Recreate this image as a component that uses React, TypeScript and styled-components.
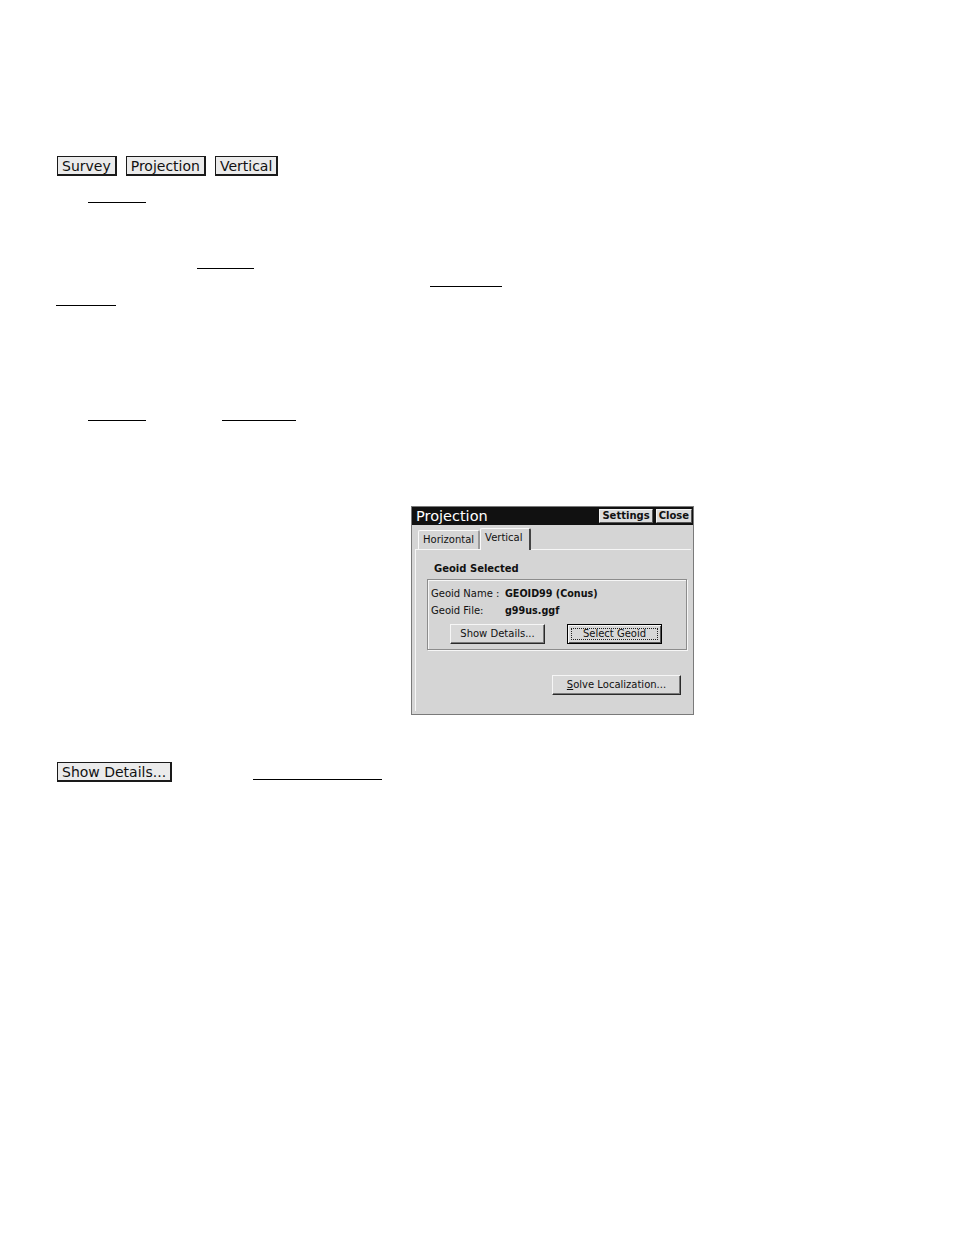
import React from 'react';
import styled, { createGlobalStyle } from 'styled-components';

const GlobalStyle = createGlobalStyle`
  html, body {
    margin: 0;
    padding: 0;
    background: #ffffff;
  }
  body {
    font-family: "DejaVu Sans", Verdana, sans-serif;
    color: #000;
  }
`;

const Page = styled.div`
  width: 954px;
  height: 1235px;
  box-sizing: border-box;
  padding: 156px 0 0 56px;
  background: #fff;
`;

const ButtonRow = styled.div`
  display: flex;
  align-items: center;
  gap: 9px;
  margin-left: 1px;
`;

const KeyButton = styled.span`
  display: inline-flex;
  align-items: center;
  justify-content: center;
  box-sizing: border-box;
  height: 20px;
  padding: 0 4px 0 4px;
  background: #ebebeb;
  border: 1px solid #1a1a1a;
  border-right-width: 2px;
  border-bottom-width: 2px;
  font-family: "DejaVu Sans", Verdana, sans-serif;
  font-size: 14px;
  line-height: 1;
  color: #111;
`;

const Row = styled.div<{ $h: number }>`
  display: flex;
  align-items: flex-end;
  height: ${(p) => p.$h}px;
`;

const FooterRow = styled.div`
  display: flex;
  align-items: flex-end;
  height: 20px;
  margin: 47px 0 0 1px;
`;

const Blank = styled.span<{ $ml: number; $w: number; $mb?: number }>`
  display: inline-block;
  margin-left: ${(p) => p.$ml}px;
  margin-bottom: ${(p) => p.$mb ?? 0}px;
  width: ${(p) => p.$w}px;
  height: 0;
  border-bottom: 1px solid #000;
`;

const Figure = styled.div`
  margin: 85px 0 0 355px;
`;

/* ---- Windows CE dialog ---- */

const Window = styled.div`
  width: 283px;
  height: 209px;
  box-sizing: border-box;
  border: 1px solid #7a7a7a;
  background: #d5d5d5;
  display: flex;
  flex-direction: column;
  font-family: "DejaVu Sans", Tahoma, sans-serif;
  font-size: 10px;
  color: #111;
`;

const TitleBar = styled.div`
  height: 18px;
  background: #111;
  display: flex;
  align-items: center;
  justify-content: space-between;
  padding: 0 1px 0 4px;
`;

const Title = styled.span`
  color: #fff;
  font-size: 14.5px;
  line-height: 1;
`;

const TitleButtons = styled.div`
  display: flex;
  gap: 3px;
`;

const TitleButton = styled.span`
  display: inline-flex;
  align-items: center;
  height: 14px;
  box-sizing: border-box;
  padding: 0 2px;
  background: #dcdcdc;
  border: 1px solid #f4f4f4;
  border-right-color: #555;
  border-bottom-color: #555;
  font-weight: bold;
  font-size: 10px;
  line-height: 1;
  color: #111;
`;

const TabStrip = styled.div`
  display: flex;
  align-items: flex-end;
  height: 22px;
  margin-top: 2px;
  padding-left: 6px;
`;

const Tab = styled.span<{ $active?: boolean }>`
  display: inline-flex;
  align-items: center;
  box-sizing: border-box;
  height: ${(p) => (p.$active ? 22 : 19)}px;
  padding: ${(p) => (p.$active ? '0 6px 5px 4px' : '0 4px 2px 4px')};
  border-left: 1px solid #fafafa;
  border-top: 1px solid #fafafa;
  border-right: 2px solid ${(p) => (p.$active ? '#444' : '#9a9a9a')};
  border-radius: 2px 2px 0 0;
  margin-bottom: ${(p) => (p.$active ? -1 : 0)}px;
  background: #d5d5d5;
  position: relative;
  z-index: ${(p) => (p.$active ? 1 : 0)};
`;

const Panel = styled.div`
  flex: 1;
  margin: 0 2px 3px 3px;
  border-top: 1px solid #f6f6f6;
  border-left: 1px solid #f6f6f6;
  padding: 12px 4px 0 11px;
  display: flex;
  flex-direction: column;
`;

const Heading = styled.div`
  font-weight: bold;
  font-size: 10px;
  margin-left: 7px;
  height: 13px;
  line-height: 13px;
`;

const GroupBox = styled.div`
  margin-top: 4px;
  height: 71px;
  box-sizing: border-box;
  border: 1px solid #8c8c8c;
  box-shadow: inset 1px 1px 0 #f6f6f6, 1px 1px 0 #f6f6f6;
  padding: 5px 3px 0 3px;
  display: flex;
  flex-direction: column;
`;

const Field = styled.div`
  display: flex;
  align-items: center;
  height: 17px;
`;

const Label = styled.span`
  width: 74px;
  font-size: 10px;
`;

const Value = styled.span`
  font-weight: bold;
  font-size: 9.6px;
`;

const ButtonLine = styled.div`
  display: flex;
  gap: 22px;
  margin: 5px 0 0 19px;
`;

const PushButton = styled.span<{ $w: number; $focused?: boolean }>`
  display: inline-flex;
  align-items: center;
  justify-content: center;
  box-sizing: border-box;
  width: ${(p) => p.$w}px;
  height: 20px;
  background: #d8d8d8;
  border: 1px solid ${(p) => (p.$focused ? '#000' : '#f6f6f6')};
  border-right-color: ${(p) => (p.$focused ? '#000' : '#2a2a2a')};
  border-bottom-color: ${(p) => (p.$focused ? '#000' : '#2a2a2a')};
  box-shadow: ${(p) =>
    p.$focused
      ? 'inset 1px 1px 0 #f6f6f6, inset -1px -1px 0 #555'
      : 'inset -1px -1px 0 #7a7a7a'};
  font-size: 10px;
  line-height: 1;
  position: relative;
`;

const FocusRing = styled.span`
  position: absolute;
  inset: 3px;
  border: 1px dotted #222;
`;

const Underlined = styled.span`
  text-decoration: underline;
`;

const Footer = styled.div`
  display: flex;
  justify-content: flex-end;
  margin: 25px 6px 0 0;
`;

const Dialog: React.FC = () => (
  <Window>
    <TitleBar>
      <Title>Projection</Title>
      <TitleButtons>
        <TitleButton>Settings</TitleButton>
        <TitleButton>Close</TitleButton>
      </TitleButtons>
    </TitleBar>
    <TabStrip>
      <Tab>Horizontal</Tab>
      <Tab $active>Vertical</Tab>
    </TabStrip>
    <Panel>
      <Heading>Geoid Selected</Heading>
      <GroupBox>
        <Field>
          <Label>Geoid Name :</Label>
          <Value>GEOID99 (Conus)</Value>
        </Field>
        <Field>
          <Label>Geoid File:</Label>
          <Value>g99us.ggf</Value>
        </Field>
        <ButtonLine>
          <PushButton $w={95}>Show Details...</PushButton>
          <PushButton $w={95} $focused>
            <FocusRing />
            Select Geoid
          </PushButton>
        </ButtonLine>
      </GroupBox>
      <Footer>
        <PushButton $w={129}>
          <span>
            <Underlined>S</Underlined>olve Localization...
          </span>
        </PushButton>
      </Footer>
    </Panel>
  </Window>
);

const App: React.FC = () => (
  <>
    <GlobalStyle />
    <Page>
      <ButtonRow>
        <KeyButton>Survey</KeyButton>
        <KeyButton>Projection</KeyButton>
        <KeyButton>Vertical</KeyButton>
      </ButtonRow>

      <Row $h={27}>
        <Blank $ml={32} $w={58} />
      </Row>
      <Row $h={66}>
        <Blank $ml={141} $w={57} />
      </Row>
      <Row $h={18}>
        <Blank $ml={374} $w={72} />
      </Row>
      <Row $h={19}>
        <Blank $ml={0} $w={60} />
      </Row>
      <Row $h={115}>
        <Blank $ml={32} $w={58} />
        <Blank $ml={76} $w={74} />
      </Row>

      <Figure>
        <Dialog />
      </Figure>

      <FooterRow>
        <KeyButton>Show Details...</KeyButton>
        <Blank $ml={81} $w={129} $mb={2} />
      </FooterRow>
    </Page>
  </>
);

export default App;
